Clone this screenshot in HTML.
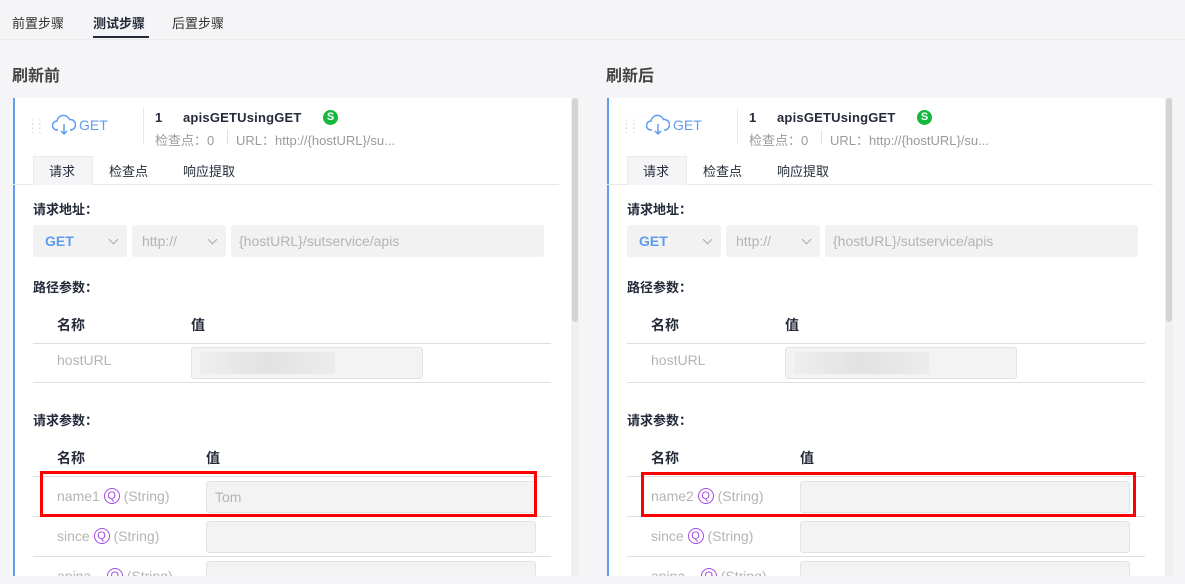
<!DOCTYPE html>
<html><head><meta charset="utf-8"><style>
*{margin:0;padding:0;box-sizing:border-box}
html,body{width:1185px;height:584px;overflow:hidden}
body{background:#f5f5f7;font-family:"Liberation Sans","Noto Sans CJK SC",sans-serif;font-size:14px;color:#252b3a;position:relative}
.a{position:absolute;white-space:nowrap}
.top{position:absolute;left:0;top:0;width:1185px;height:40px;background:#f5f5f7;border-bottom:1px solid #ebebeb}
.card{position:absolute;top:98px;height:478px;background:#fff;border-left:2px solid #5e9cf0;overflow:hidden}
.sb{position:absolute;top:98px;width:8px;height:478px;background:#f0f0f0}
.sb i{position:absolute;left:1px;top:0;width:6px;height:224px;background:#d4d4d4;border-radius:3px}
.g{color:#b4b4b4}
.box{position:absolute;background:#f2f2f2;border-radius:3px}
.inp{position:absolute;background:#f3f3f3;border:1px solid #e2e2e2;border-radius:3px}
.line{position:absolute;height:1px;background:#dfdfdf}
.b{font-weight:bold}
.q{display:inline-block;width:16px;height:16px;border:1.3px solid #a24be0;border-radius:50%;color:#a24be0;font-size:11px;text-align:center;line-height:14px;vertical-align:top;margin-top:0px}
.red{position:absolute;border:3px solid #f00}
.chev{position:absolute;width:7px;height:7px;border-right:1px solid #aaa;border-bottom:1px solid #aaa;transform:rotate(45deg)}
</style></head><body>
<div class="top"></div>
<div class="a" style="left:12px;top:13px;color:#333;font-size:13px">前置步骤</div>
<div class="a b" style="left:93px;top:13px;color:#252b3a;font-size:13px">测试步骤</div>
<div style="position:absolute;left:93px;top:36px;width:56px;height:2px;background:#252b3a"></div>
<div class="a" style="left:172px;top:13px;color:#333;font-size:13px">后置步骤</div>

<div class="a b" style="left:12px;top:62px;font-size:16px;color:#444">刷新前</div>
<div class="a b" style="left:606px;top:62px;font-size:16px;color:#444">刷新后</div>

<div class="card" style="left:13px;width:558px"></div>
<div class="sb" style="left:571px"><i></i></div>
<div class="card" style="left:607px;width:558px"></div>
<div class="sb" style="left:1165px"><i></i></div>

<script>
function build(ox,nm,val){
var s='';
s+='<div class="a" style="left:'+(ox+18)+'px;top:121px;color:#c8c8c8;font-size:10px;line-height:4px;letter-spacing:1px">: :<br>: :<br>: :</div>';
s+='<svg class="a" style="left:'+(ox+39)+'px;top:114px" width="24" height="22" viewBox="0 0 24 22"><path d="M6 16H5a4.5 4.5 0 0 1 0-9 6.5 6.5 0 0 1 12.5-1.5A5 5 0 0 1 19 16h-1" fill="none" stroke="#5e9cf0" stroke-width="1.5"/><path d="M12 10v10M9 17l3 3 3-3" fill="none" stroke="#5e9cf0" stroke-width="1.5"/></svg>';
s+='<div class="a" style="left:'+(ox+66)+'px;top:117px;color:#5e9cf0;font-size:14px">GET</div>';
s+='<div class="a" style="left:'+(ox+130)+'px;top:108px;width:1px;height:36px;background:#e8e8e8"></div>';
s+='<div class="a b" style="left:'+(ox+142)+'px;top:110px;font-size:13px">1</div>';
s+='<div class="a b" style="left:'+(ox+170)+'px;top:110px;font-size:13px;letter-spacing:0.2px">apisGETUsingGET</div>';
s+='<div class="a" style="left:'+(ox+310)+'px;top:110px;width:15px;height:15px;border-radius:50%;background:#14b83c;color:#fff;font-size:11px;font-weight:bold;text-align:center;line-height:15px">S</div>';
s+='<div class="a" style="left:'+(ox+142)+'px;top:130px;color:#9a9a9a;font-size:13px">检查点：0</div>';
s+='<div class="a" style="left:'+(ox+214)+'px;top:130px;width:1px;height:14px;background:#e0e0e0"></div>';
s+='<div class="a" style="left:'+(ox+223)+'px;top:130px;color:#9a9a9a;font-size:13px">URL：http://{hostURL}/su...</div>';
s+='<div class="a" style="left:'+(ox+0)+'px;top:184px;width:546px;height:1px;background:#e8e8e8"></div>';
s+='<div class="a" style="left:'+(ox+20)+'px;top:156px;width:60px;height:29px;background:#f5f5f7;border:1px solid #ebebeb;border-bottom:none"></div>';
s+='<div class="a" style="left:'+(ox+36)+'px;top:161px;font-size:13px">请求</div>';
s+='<div class="a" style="left:'+(ox+96)+'px;top:161px;font-size:13px">检查点</div>';
s+='<div class="a" style="left:'+(ox+170)+'px;top:161px;font-size:13px">响应提取</div>';
s+='<div class="a b" style="left:'+(ox+20)+'px;top:199px;font-size:13px">请求地址：</div>';
s+='<div class="box" style="left:'+(ox+20)+'px;top:225px;width:94px;height:32px"></div><div class="a b" style="left:'+(ox+32)+'px;top:233px;color:#5e9cf0;font-size:14px">GET</div><div class="chev" style="left:'+(ox+97)+'px;top:236px"></div>';
s+='<div class="box" style="left:'+(ox+119)+'px;top:225px;width:94px;height:32px"></div><div class="a g" style="left:'+(ox+129)+'px;top:233px">http://</div><div class="chev" style="left:'+(ox+196)+'px;top:236px"></div>';
s+='<div class="box" style="left:'+(ox+218)+'px;top:225px;width:313px;height:32px"></div><div class="a g" style="left:'+(ox+226)+'px;top:233px">{hostURL}/sutservice/apis</div>';
s+='<div class="a b" style="left:'+(ox+20)+'px;top:277px;font-size:13px">路径参数：</div>';
s+='<div class="a b" style="left:'+(ox+44)+'px;top:315px">名称</div><div class="a b" style="left:'+(ox+178)+'px;top:315px">值</div>';
s+='<div class="line" style="left:'+(ox+20)+'px;top:343px;width:518px"></div>';
s+='<div class="a g" style="left:'+(ox+44)+'px;top:352px">hostURL</div>';
s+='<div class="inp" style="left:'+(ox+178)+'px;top:347px;width:232px;height:32px"></div><div class="a" style="left:'+(ox+187)+'px;top:352px;width:135px;height:22px;background:linear-gradient(90deg,#eee,#e2e2e2,#ececec)"></div>';
s+='<div class="line" style="left:'+(ox+20)+'px;top:382px;width:518px"></div>';
s+='<div class="a b" style="left:'+(ox+20)+'px;top:410px;font-size:13px">请求参数：</div>';
s+='<div class="a b" style="left:'+(ox+44)+'px;top:448px">名称</div><div class="a b" style="left:'+(ox+193)+'px;top:448px">值</div>';
s+='<div class="line" style="left:'+(ox+20)+'px;top:476px;width:518px"></div>';
s+='<div class="a g" style="left:'+(ox+44)+'px;top:488px">'+nm+' <span class="q">Q</span> (String)</div>';
s+='<div class="inp" style="left:'+(ox+193)+'px;top:481px;width:330px;height:32px"></div><div class="a g" style="left:'+(ox+202)+'px;top:489px">'+val+'</div>';
s+='<div class="line" style="left:'+(ox+20)+'px;top:516px;width:518px"></div>';
s+='<div class="a g" style="left:'+(ox+44)+'px;top:528px">since <span class="q">Q</span> (String)</div>';
s+='<div class="inp" style="left:'+(ox+193)+'px;top:521px;width:330px;height:32px"></div>';
s+='<div class="line" style="left:'+(ox+20)+'px;top:556px;width:518px"></div>';
s+='<div class="a g" style="left:'+(ox+44)+'px;top:568px">apina... <span class="q">Q</span> (String)</div>';
s+='<div class="inp" style="left:'+(ox+193)+'px;top:561px;width:330px;height:32px"></div>';
return s;}
var html=build(13,'name1','Tom')+build(607,'name2','');
html+='<div class="red" style="left:40px;top:471px;width:497px;height:46px"></div>';
html+='<div class="red" style="left:641px;top:472px;width:495px;height:45px"></div>';
html+='<div style="position:absolute;left:0;top:576px;width:1185px;height:8px;background:#f5f5f7"></div>';
document.body.insertAdjacentHTML('beforeend',html);
</script>
</body></html>
